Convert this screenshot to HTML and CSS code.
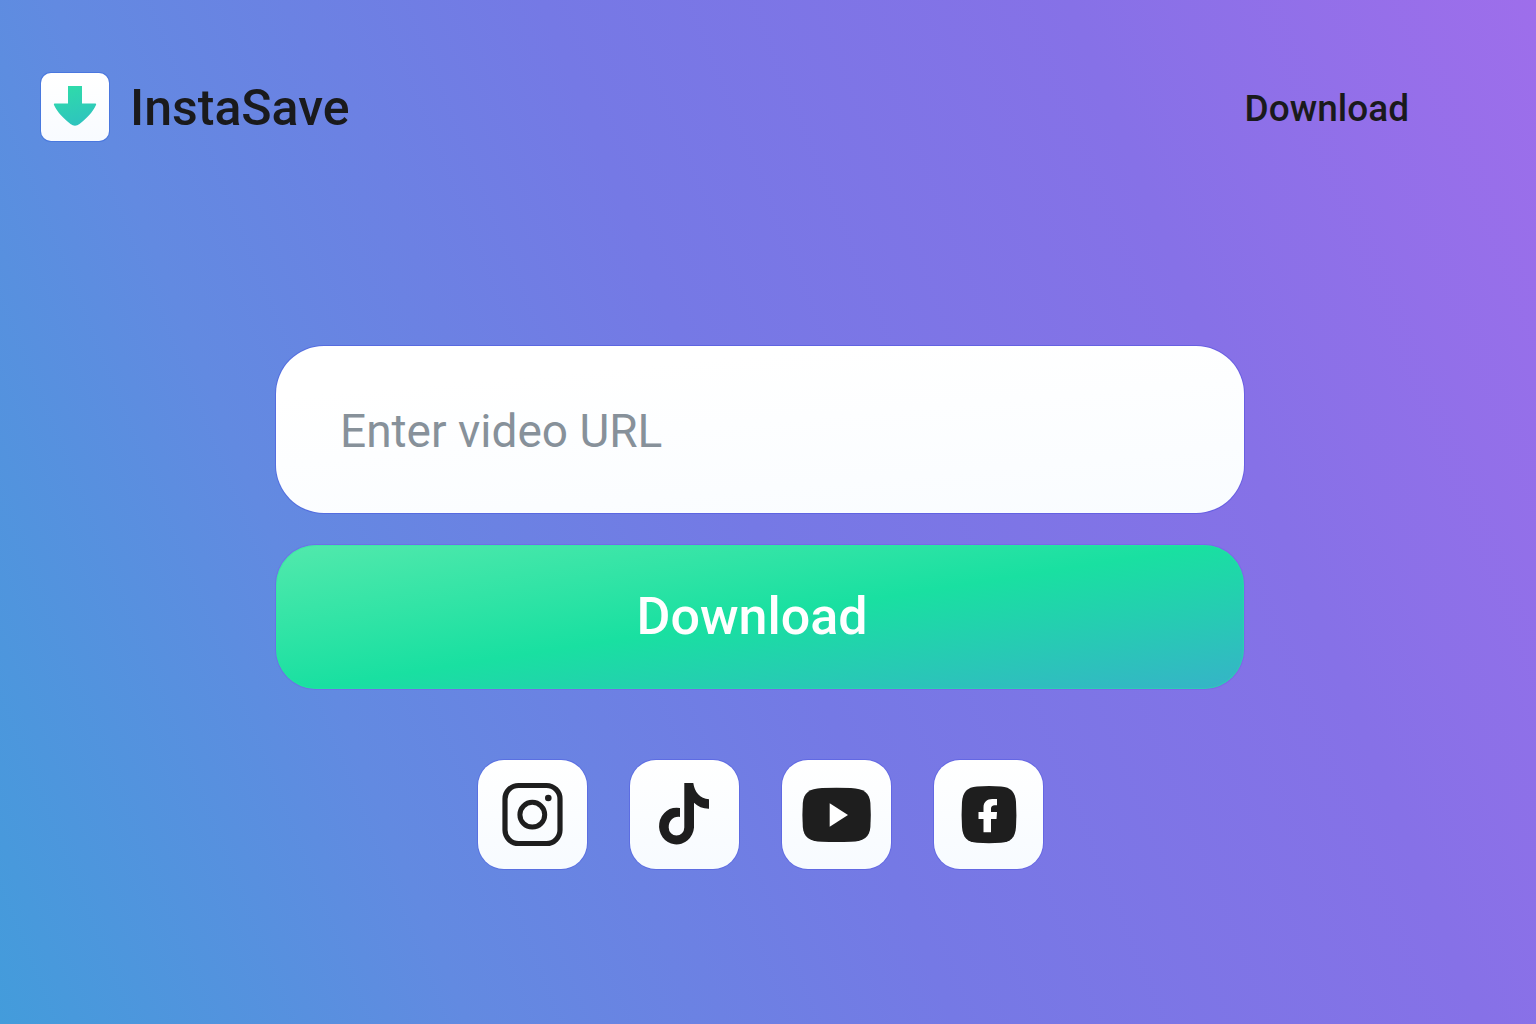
FILE: index.html
```html
<!DOCTYPE html>
<html lang="en">
<head>
<meta charset="utf-8">
<meta name="viewport" content="width=device-width, initial-scale=1">
<title>InstaSave</title>
<link rel="stylesheet" href="styles.css">
</head>
<body>
<header class="header">
  <a class="brand" href="#">
    <svg class="brand-logo" viewBox="0 0 68 68" aria-hidden="true">
      <defs>
        <linearGradient id="arrow" x1="0" y1="0" x2="0.3" y2="1">
          <stop offset="0" stop-color="#2fdda8"/>
          <stop offset="1" stop-color="#2ec5bd"/>
        </linearGradient>
      </defs>
      <path fill="url(#arrow)" d="M27 13H41V30.500H54.500Q55.600 30.500 55 32C51.500 39.500 46 45 38.500 51Q34 54.600 29.500 51C22 45 16.500 39.500 13 32Q12.400 30.500 13.500 30.500H27Z"/>
    </svg>
    <span class="brand-name">InstaSave</span>
  </a>
  <nav class="nav">
    <a class="nav-link" href="#download">Download</a>
  </nav>
</header>
<main class="main">
  <form class="form" id="download">
    <input class="url-input" type="url" placeholder="Enter video URL" aria-label="Enter video URL">
    <button class="submit" type="button">Download</button>
  </form>
  <div class="platforms">
    <a class="platform" href="#" aria-label="Instagram">
      <svg viewBox="0 0 109 109" aria-hidden="true">
        <rect x="27" y="25.500" width="55" height="58" rx="13.500" fill="none" stroke="#1e1e1e" stroke-width="5.200"/>
        <circle cx="54.300" cy="54.700" r="12.400" fill="none" stroke="#1e1e1e" stroke-width="5"/>
        <circle cx="70.300" cy="38" r="3.300" fill="#1e1e1e"/>
      </svg>
    </a>
    <a class="platform" href="#" aria-label="TikTok">
      <svg viewBox="0 0 109 109" aria-hidden="true">
        <path fill="#1e1e1e" d="M54.300 23H63.300C64.500 32 70 38.800 79 39.300V48.700C73 48.800 68 46.500 64 42.700V67.500A17.500 18.400 0 1 1 50 48V57C43.500 56 38.700 60.500 38.700 67.500A7.800 8 0 0 0 54.300 67.500Z"/>
      </svg>
    </a>
    <a class="platform" href="#" aria-label="YouTube">
      <svg viewBox="0 0 109 109" aria-hidden="true">
        <path fill="#1e1e1e" d="M40 28Q54.500 27.400 69 28C82 28.600 87.500 33 88.400 43Q89.200 55 88.400 67C87.500 77 82 81.200 69 81.800Q54.500 82.400 40 81.800C27 81.200 21.700 77 20.800 67Q20 55 20.800 43C21.700 33 27 28.600 40 28Z"/>
        <path fill="#fff" d="M47.700 43.300L66 55L47.700 66.700Z"/>
      </svg>
    </a>
    <a class="platform" href="#" aria-label="Facebook">
      <svg viewBox="0 0 109 109" aria-hidden="true">
        <path fill="#1e1e1e" d="M43 26.400Q55 25.600 67 26.400C77 27.200 81.200 32 82 42Q82.800 54.500 82 67C81.200 77.500 77 82 67 82.800Q55 83.600 43 82.800C33 82 28.800 77.500 28 67Q27.200 54.500 28 42C28.800 32 33 27.200 43 26.400Z"/>
        <path fill="#fff" d="M63 39V45.200H60.700C58.200 45.200 57 46.500 57 48.500V52H63L62.500 59H57V72.300H49.500V59H44.500V52H49.500V47.500C49.500 42 53 39 58.200 39Z"/>
      </svg>
    </a>
  </div>
</main>
</body>
</html>
```
FILE: styles.css
```css
* {
  box-sizing: border-box;
}

body {
  margin: 0;
  min-height: 100vh;
  font-family: Roboto, "Liberation Sans", sans-serif;
  color: #1a1a1c;
  background: linear-gradient(68deg, #439cdb 0%, #628ae1 24%, #7579e5 49%, #8671e7 76%, #9e6eeb 100%);
}

a {
  color: inherit;
  text-decoration: none;
}

.header {
  display: flex;
  align-items: center;
  justify-content: space-between;
  padding: 73px 127px 0 41px;
}

.brand {
  display: flex;
  align-items: center;
  gap: 21px;
}

.brand-logo {
  width: 68px;
  height: 68px;
  border-radius: 10px;
  background: linear-gradient(#fff, #f8fbff);
  box-shadow: 0 0 0 1px rgba(40, 90, 220, 0.4);
}

.brand-name {
  padding-top: 2px;
  font-size: 50px;
  font-weight: 500;
  line-height: 66px;
}

.nav-link {
  display: block;
  padding-top: 4px;
  font-size: 37px;
  font-weight: 500;
  line-height: 64px;
}

.main {
  display: flex;
  flex-direction: column;
  align-items: center;
  gap: 71px;
  padding: 205px 32px 64px 16px;
}

.form {
  display: flex;
  flex-direction: column;
  gap: 32px;
  width: 100%;
  max-width: 968px;
}

.url-input,
.submit {
  width: 100%;
  border: 0;
  font-family: inherit;
}

.url-input {
  height: 167px;
  padding: 2px 64px 0;
  border-radius: 48px;
  font-size: 46px;
  color: #1a1a1c;
  background: linear-gradient(175deg, #fff 20%, #f9fcff);
  box-shadow: 0 0 0 1px rgba(60, 70, 220, 0.4);
}

.url-input::placeholder {
  color: #87919a;
  opacity: 1;
}

.submit {
  height: 144px;
  padding: 0 16px 2px 0;
  border-radius: 40px;
  font-size: 52px;
  font-weight: 500;
  color: #fff;
  background: linear-gradient(171deg, #52e9ac 0%, #19e0a1 50%, #36b3c8 100%);
  box-shadow: 0 0 0 1px rgba(120, 90, 235, 0.5), inset 0 0 0 1px rgba(40, 230, 160, 0.4);
}

.platforms {
  display: flex;
  flex-wrap: wrap;
  justify-content: center;
  gap: 43px;
}

.platform {
  width: 109px;
  height: 109px;
  border-radius: 26px;
  background: linear-gradient(#fff, #f7fbff);
  box-shadow: 0 0 0 1px rgba(70, 80, 225, 0.4);
}

.platform svg {
  display: block;
}
```
